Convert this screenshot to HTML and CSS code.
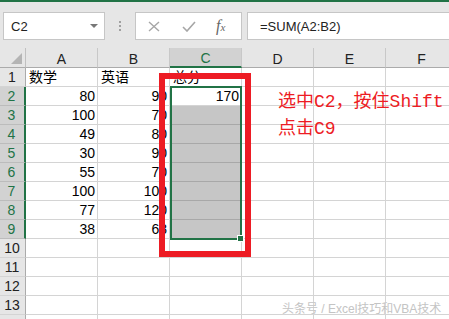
FILE: index.html
```html
<!DOCTYPE html>
<html lang="zh-CN">
<head>
    <meta charset="UTF-8">
    <title>SUM</title>
    <link rel="stylesheet" href="styles.css">
</head>
<body>
    <div class="app">
        <div class="toolbar">
            <div class="namebox">
                <span>C2</span>
                <span class="caret"></span>
            </div>
            <div class="grip"><i></i><i></i><i></i></div>
            <div class="fxbox">
                <svg width="12" height="11" viewBox="0 0 12 11"><path d="M1 1L11 10M11 1L1 10" stroke="#a6a6a6" stroke-width="1.4" fill="none"/></svg>
                <svg width="14" height="11" viewBox="0 0 14 11"><path d="M1 6L5 10L13 1" stroke="#a6a6a6" stroke-width="1.6" fill="none"/></svg>
                <span class="fx">f<sub>x</sub></span>
            </div>
            <div class="formula">=SUM(A2:B2)</div>
        </div>

        <div class="sheet">
            <div class="corner"><span class="tri"></span></div>
            <div class="colhead">A</div>
            <div class="colhead">B</div>
            <div class="colhead sel">C</div>
            <div class="colhead">D</div>
            <div class="colhead">E</div>
            <div class="colhead">F</div>

            <div class="rowhead">1</div>
            <div class="cell">数学</div><div class="cell">英语</div><div class="cell">总分</div><div class="cell"></div><div class="cell"></div><div class="cell"></div>

            <div class="rowhead sel">2</div>
            <div class="cell num">80</div><div class="cell num">90</div><div class="cell num">170</div><div class="cell"></div><div class="cell"></div><div class="cell"></div>

            <div class="rowhead sel">3</div>
            <div class="cell num">100</div><div class="cell num">70</div><div class="cell shade"></div><div class="cell"></div><div class="cell"></div><div class="cell"></div>

            <div class="rowhead sel">4</div>
            <div class="cell num">49</div><div class="cell num">80</div><div class="cell shade"></div><div class="cell"></div><div class="cell"></div><div class="cell"></div>

            <div class="rowhead sel">5</div>
            <div class="cell num">30</div><div class="cell num">90</div><div class="cell shade"></div><div class="cell"></div><div class="cell"></div><div class="cell"></div>

            <div class="rowhead sel">6</div>
            <div class="cell num">55</div><div class="cell num">70</div><div class="cell shade"></div><div class="cell"></div><div class="cell"></div><div class="cell"></div>

            <div class="rowhead sel">7</div>
            <div class="cell num">100</div><div class="cell num">100</div><div class="cell shade"></div><div class="cell"></div><div class="cell"></div><div class="cell"></div>

            <div class="rowhead sel">8</div>
            <div class="cell num">77</div><div class="cell num">120</div><div class="cell shade"></div><div class="cell"></div><div class="cell"></div><div class="cell"></div>

            <div class="rowhead sel">9</div>
            <div class="cell num">38</div><div class="cell num">68</div><div class="cell shade"></div><div class="cell"></div><div class="cell"></div><div class="cell"></div>

            <div class="rowhead">10</div>
            <div class="cell"></div><div class="cell"></div><div class="cell"></div><div class="cell"></div><div class="cell"></div><div class="cell"></div>

            <div class="rowhead">11</div>
            <div class="cell"></div><div class="cell"></div><div class="cell"></div><div class="cell"></div><div class="cell"></div><div class="cell"></div>

            <div class="rowhead">12</div>
            <div class="cell"></div><div class="cell"></div><div class="cell"></div><div class="cell"></div><div class="cell"></div><div class="cell"></div>

            <div class="rowhead">13</div>
            <div class="cell"></div><div class="cell"></div><div class="cell"></div><div class="cell"></div><div class="cell"></div><div class="cell"></div>

            <div class="rowhead"></div>
            <div class="cell"></div><div class="cell"></div><div class="cell"></div><div class="cell"></div><div class="cell"></div><div class="cell"></div>
        </div>

        <!-- overlays -->
        <div class="selection"><span class="handle"></span></div>
        <div class="redbox"></div>
        <div class="note">选中C2，按住Shift<br>点击C9</div>
        <div class="watermark">头条号 / Excel技巧和VBA技术</div>
    </div>
</body>
</html>
```

FILE: styles.css
```css
body {
    margin: 0;
    font-family: "Liberation Sans", "Noto Sans CJK SC", sans-serif;
    background: #fff;
}

.app {
    position: relative;
    width: 449px;
    height: 319px;
    overflow: hidden;
}

/* formula bar */
.toolbar {
    height: 48px;
    border-top: 2px solid #217346;
    background: #e6e6e6;
    display: flex;
    align-items: flex-start;
    padding-top: 10px;
    box-sizing: border-box;
}

.namebox {
    margin-left: 3px;
    width: 102px;
    height: 28px;
    box-sizing: border-box;
    background: #fff;
    border: 1px solid #c6c6c6;
    display: flex;
    align-items: center;
    justify-content: space-between;
    padding: 0 6px 0 7px;
    font-size: 13px;
    color: #222;
}

.caret {
    width: 0;
    height: 0;
    border-left: 4px solid transparent;
    border-right: 4px solid transparent;
    border-top: 4px solid #777;
}

.grip {
    width: 30px;
    height: 28px;
    display: flex;
    flex-direction: column;
    align-items: center;
    justify-content: center;
    gap: 2px;
}

.grip i {
    width: 2px;
    height: 2px;
    background: #a0a0a0;
}

.fxbox {
    width: 107px;
    height: 28px;
    box-sizing: border-box;
    background: #fff;
    border: 1px solid #c6c6c6;
    display: flex;
    align-items: center;
    padding-left: 12px;
    gap: 22px;
}

.fx {
    font-family: "Liberation Serif", serif;
    font-style: italic;
    font-size: 16px;
    color: #666;
    margin-left: -2px;
}

.fx sub {
    font-size: 11px;
    vertical-align: 0;
}

.formula {
    margin-left: 5px;
    flex: 1;
    height: 28px;
    box-sizing: border-box;
    background: #fff;
    border: 1px solid #c6c6c6;
    border-right: none;
    display: flex;
    align-items: center;
    padding-left: 12px;
    font-size: 13px;
    color: #222;
}

/* grid */
.sheet {
    display: grid;
    grid-template-columns: 26px repeat(6, 72px);
    grid-template-rows: 20px repeat(14, 19px);
    font-size: 14px;
}

.sheet > div {
    box-sizing: border-box;
}

.corner {
    background: #e6e6e6;
    border-right: 1px solid #c0c0c0;
    border-bottom: 1px solid #ababab;
    position: relative;
}

.tri {
    position: absolute;
    right: 3px;
    bottom: 3px;
    width: 0;
    height: 0;
    border-left: 11px solid transparent;
    border-bottom: 11px solid #b4b4b4;
}

.colhead {
    background: #e6e6e6;
    border-right: 1px solid #c8c8c8;
    border-bottom: 1px solid #ababab;
    display: flex;
    align-items: center;
    justify-content: center;
    color: #222;
    padding-top: 2px;
}

.colhead.sel {
    background: #d2d2d2;
    color: #217346;
    border-bottom: 2px solid #217346;
}

.rowhead {
    background: #e6e6e6;
    border-right: 1px solid #ababab;
    border-bottom: 1px solid #d4d4d4;
    display: flex;
    align-items: center;
    justify-content: center;
    color: #222;
    padding-right: 1px;
}

.rowhead.sel {
    background: #d2d2d2;
    color: #217346;
    border-right: 2px solid #217346;
    border-bottom-color: #bcbcbc;
}

.cell {
    border-right: 1px solid #d4d4d4;
    border-bottom: 1px solid #d4d4d4;
    line-height: 14px;
    display: flex;
    align-items: flex-end;
    padding: 0 2px 2px 3px;
    color: #000;
    white-space: nowrap;
}

.cell.num {
    justify-content: flex-end;
}

.cell.shade {
    background: #c6c6c6;
    border-bottom-color: #a8a8a8;
}

/* overlays */
.selection {
    position: absolute;
    left: 170px;
    top: 86px;
    width: 72px;
    height: 154px;
    box-sizing: border-box;
    border: 2px solid #217346;
}

.handle {
    position: absolute;
    right: -4px;
    bottom: -4px;
    width: 5px;
    height: 5px;
    background: #217346;
    border: 1px solid #fff;
}

.redbox {
    position: absolute;
    left: 159px;
    top: 73px;
    width: 92px;
    height: 184px;
    box-sizing: border-box;
    border: 6px solid #ed1c24;
}

.note {
    position: absolute;
    left: 278px;
    top: 89px;
    font-family: "Liberation Mono", "Noto Sans CJK SC", monospace;
    font-size: 18px;
    line-height: 27px;
    color: #ed1c24;
    white-space: nowrap;
}

.watermark {
    position: absolute;
    left: 282px;
    top: 299px;
    font-size: 12px;
    color: #c4c4c4;
    white-space: nowrap;
    text-shadow: 0 0 1px #fff;
}
```
